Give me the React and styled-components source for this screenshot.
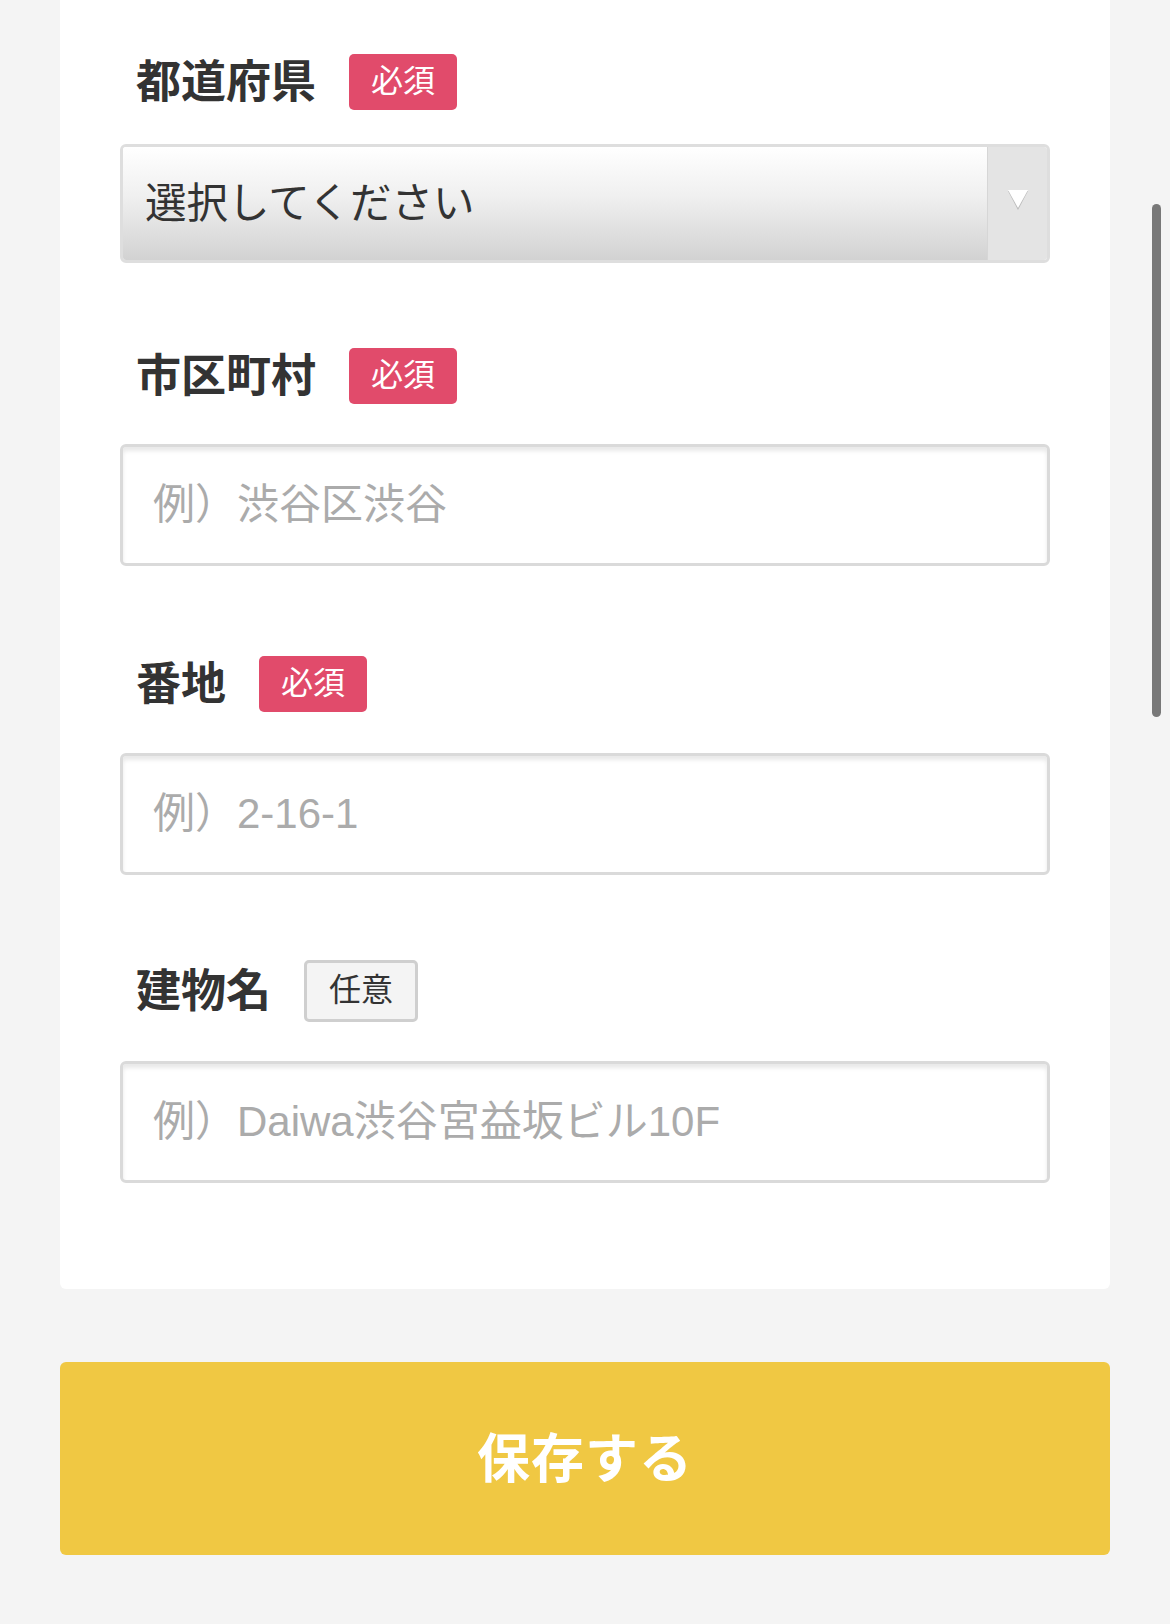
import React from "react";
import styled, { createGlobalStyle } from "styled-components";

const GlobalStyle = createGlobalStyle`
  html, body {
    margin: 0;
    padding: 0;
    background: #f4f4f4;
  }
  body {
    font-family: "Liberation Sans", "Noto Sans CJK JP", sans-serif;
    color: #333;
  }
`;

const Page = styled.div`
  width: 1170px;
  padding: 0 60px 69px;
  box-sizing: border-box;
`;

const Card = styled.div`
  background: #fff;
  border-radius: 0 0 6px 6px;
  padding: 52px 60px 106px;
  display: flex;
  flex-direction: column;
`;

const Field = styled.div`
  display: flex;
  flex-direction: column;
  margin-top: ${p => p.$spacing || 0}px;
`;

const LabelRow = styled.div`
  display: flex;
  align-items: center;
  height: 60px;
  padding-left: 16px;
  gap: 33px;
`;

const Label = styled.span`
  font-size: 45px;
  font-weight: 700;
  color: #333;
  line-height: 1;
`;

const Badge = styled.span`
  box-sizing: border-box;
  display: inline-flex;
  align-items: center;
  justify-content: center;
  height: ${p => (p.$optional ? "62px" : "56px")};
  padding: 0 22px 2px;
  border-radius: 5px;
  font-size: 32px;
  line-height: 1;
  background: ${p => (p.$optional ? "#f4f4f4" : "#e14b6b")};
  color: ${p => (p.$optional ? "#333" : "#fff")};
  border: ${p => (p.$optional ? "3px solid #cfcfcf" : "none")};
`;

const SelectBox = styled.div`
  margin-top: 32px;
  height: 119px;
  box-sizing: border-box;
  border: 3px solid #dedede;
  border-radius: 6px;
  display: flex;
  overflow: hidden;
`;

const SelectValue = styled.div`
  flex: 1;
  display: flex;
  align-items: center;
  padding: 0 0 8px 22px;
  font-size: 41.5px;
  color: #333;
  background: linear-gradient(to bottom, #ffffff 0%, #efefef 45%, #d2d2d2 100%);
`;

const SelectArrow = styled.div`
  width: 60px;
  display: flex;
  align-items: flex-start;
  justify-content: center;
  padding-top: 42px;
  box-sizing: border-box;
  background: #e4e4e4;
  border-left: 1px solid #d6d6d6;
`;

const TextInput = styled.input`
  margin-top: ${p => p.$gap}px;
  height: 122px;
  box-sizing: border-box;
  width: 100%;
  border: 3px solid #dadada;
  border-radius: 6px;
  box-shadow: inset 0 4px 4px rgba(0, 0, 0, 0.09);
  padding: 0 0 0 30px;
  font-family: "Liberation Sans", "Noto Sans CJK JP", sans-serif;
  font-size: 42px;
  color: #333;
  outline: none;
  &::placeholder {
    color: #ababab;
  }
`;

const SaveButton = styled.button`
  margin-top: 73px;
  width: 100%;
  height: 193px;
  border: none;
  border-radius: 6px;
  background: #f0c843;
  color: #fff;
  padding: 0 0 8px;
  font-family: "Liberation Sans", "Noto Sans CJK JP", sans-serif;
  font-size: 53px;
  font-weight: 700;
  letter-spacing: 1px;
  cursor: pointer;
`;

const ScrollThumb = styled.div`
  position: fixed;
  left: 1152px;
  top: 204px;
  width: 9px;
  height: 513px;
  border-radius: 5px;
  background: #787878;
`;

function Arrow() {
  return (
    <svg width="22" height="22" viewBox="0 0 22 22">
      <polygon points="1,2 21,2 11,21" fill="#b9b9b9" />
      <polygon points="1,1 21,1 11,19" fill="#fff" />
    </svg>
  );
}

const fields = [
  { label: "市区町村", placeholder: "例）渋谷区渋谷", spacing: 83, gap: 38 },
  { label: "番地", placeholder: "例）2-16-1", spacing: 88, gap: 39 },
  { label: "建物名", placeholder: "例）Daiwa渋谷宮益坂ビル10F", spacing: 86, gap: 40, optional: true },
];

export default function App() {
  return (
    <>
      <GlobalStyle />
      <Page>
        <Card>
          <Field>
            <LabelRow>
              <Label>都道府県</Label>
              <Badge>必須</Badge>
            </LabelRow>
            <SelectBox>
              <SelectValue>選択してください</SelectValue>
              <SelectArrow>
                <Arrow />
              </SelectArrow>
            </SelectBox>
          </Field>
          {fields.map(f => (
            <Field key={f.label} $spacing={f.spacing}>
              <LabelRow>
                <Label>{f.label}</Label>
                <Badge $optional={f.optional}>{f.optional ? "任意" : "必須"}</Badge>
              </LabelRow>
              <TextInput $gap={f.gap} placeholder={f.placeholder} />
            </Field>
          ))}
        </Card>
        <SaveButton>保存する</SaveButton>
      </Page>
      <ScrollThumb />
    </>
  );
}
